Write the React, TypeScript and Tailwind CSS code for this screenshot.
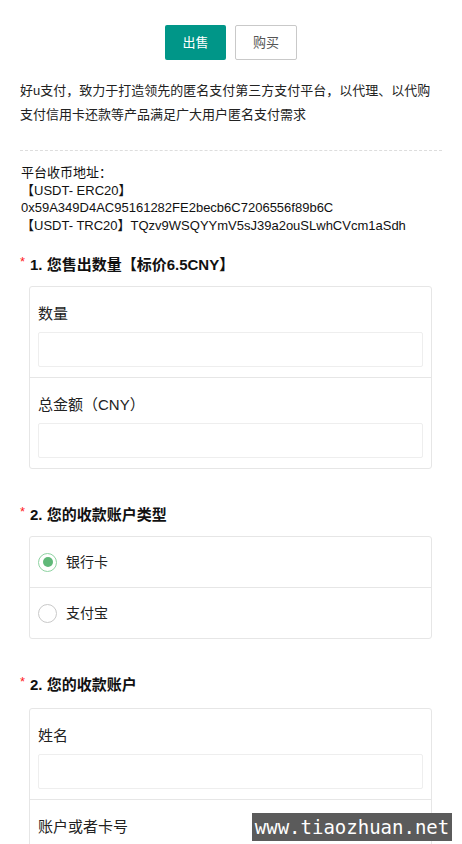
import React, { useState } from "react";

const font = { fontFamily: '"Liberation Sans", Arial, "Noto Sans CJK SC", sans-serif' };

const Field: React.FC<{ label: string; last?: boolean }> = ({ label, last }) => (
    <div className={"px-2 pt-[16px] pb-[10px]" + (last ? "" : " border-b border-[#e6e6e6]")}>
        <div className="text-[15px] leading-[22px] text-[#222] mb-[7px]">{label}</div>
        <input className="block w-full h-[35px] border border-[#eee] rounded-[2px] px-2 text-sm outline-none" />
    </div>
);

const Title: React.FC<{ text: string }> = ({ text }) => (
    <div className="flex items-start h-[22px]">
        <span className="text-[#ff1d1d] text-[13px] leading-[16px] w-[10px]">*</span>
        <span className="font-bold text-[15px] leading-[22px] text-[#111]">{text}</span>
    </div>
);

const Radio: React.FC<{ label: string; checked: boolean; onClick: () => void; last?: boolean }> = ({ label, checked, onClick, last }) => (
    <div
        className={"flex items-center px-2 cursor-pointer" + (last ? " h-[50px]" : " h-[51px] border-b border-[#e6e6e6]")}
        onClick={onClick}
    >
        <div
            className={"w-[19px] h-[19px] rounded-full border-[1.5px] flex items-center justify-center " +
                (checked ? "border-[#8fd3a2]" : "border-[#c9c9c9]")}
        >
            {checked ? <div className="w-[10px] h-[10px] rounded-full bg-[#5fb878]" /> : null}
        </div>
        <span className="ml-[9px] text-[14px] text-[#222]">{label}</span>
    </div>
);

export default function App() {
    const [mode, setMode] = useState<"sell" | "buy">("sell");
    const [type, setType] = useState<string>("bank");

    return (
        <div className="relative w-[462px] h-[844px] overflow-hidden bg-white" style={font}>
            <div className="flex justify-center gap-[9px] pt-[25px]">
                <button
                    className={"w-[61px] h-[35px] rounded-[2px] text-[13px] " +
                        (mode === "sell" ? "bg-[#009688] text-white" : "bg-white border border-[#c9c9c9] text-[#555]")}
                    onClick={() => setMode("sell")}
                >
                    出售
                </button>
                <button
                    className={"w-[62px] h-[35px] rounded-[2px] text-[13px] " +
                        (mode === "buy" ? "bg-[#009688] text-white" : "bg-white border border-[#c9c9c9] text-[#555]")}
                    onClick={() => setMode("buy")}
                >
                    购买
                </button>
            </div>

            <div className="px-5">
                <p className="mt-[19px] text-[13px] leading-[24px] text-[#222] -mr-[6px]">
                    好u支付，致力于打造领先的匿名支付第三方支付平台，以代理、以代购<br />
                    支付信用卡还款等产品满足广大用户匿名支付需求
                </p>

                <div className="mt-[23px] border-t border-dashed border-[#ddd]" />

                <div className="mt-[13px] text-[13px] leading-[17.5px] text-[#111] pl-[1px]">
                    <div>平台收币地址：</div>
                    <div>【USDT- ERC20】</div>
                    <div>0x59A349D4AC95161282FE2becb6C7206556f89b6C</div>
                    <div>【USDT- TRC20】TQzv9WSQYYmV5sJ39a2ouSLwhCVcm1aSdh</div>
                </div>

                <div className="mt-[20px]">
                    <Title text="1. 您售出数量【标价6.5CNY】" />
                </div>
                <div className="mt-[10px] ml-[9px] mr-[10px] border border-[#e6e6e6] rounded-[3px]">
                    <Field label="数量" />
                    <Field label="总金额（CNY）" last />
                </div>

                <div className="mt-[35px]">
                    <Title text="2. 您的收款账户类型" />
                </div>
                <div className="mt-[10px] ml-[9px] mr-[10px] border border-[#e6e6e6] rounded-[3px]">
                    <Radio label="银行卡" checked={type === "bank"} onClick={() => setType("bank")} />
                    <Radio label="支付宝" checked={type === "alipay"} onClick={() => setType("alipay")} last />
                </div>

                <div className="mt-[35px]">
                    <Title text="2. 您的收款账户" />
                </div>
                <div className="mt-[12px] ml-[9px] mr-[10px] border border-[#e6e6e6] rounded-[3px]">
                    <Field label="姓名" />
                    <Field label="账户或者卡号" last />
                </div>
            </div>

            <div
                className="absolute left-[252px] top-[813px] w-[200px] h-[28px] bg-[#5b5b5b] text-white text-[19px] leading-[28px] text-center"
                style={{ fontFamily: '"DejaVu Sans Mono", "Liberation Mono", monospace' }}
            >
                www.tiaozhuan.net
            </div>
        </div>
    );
}
